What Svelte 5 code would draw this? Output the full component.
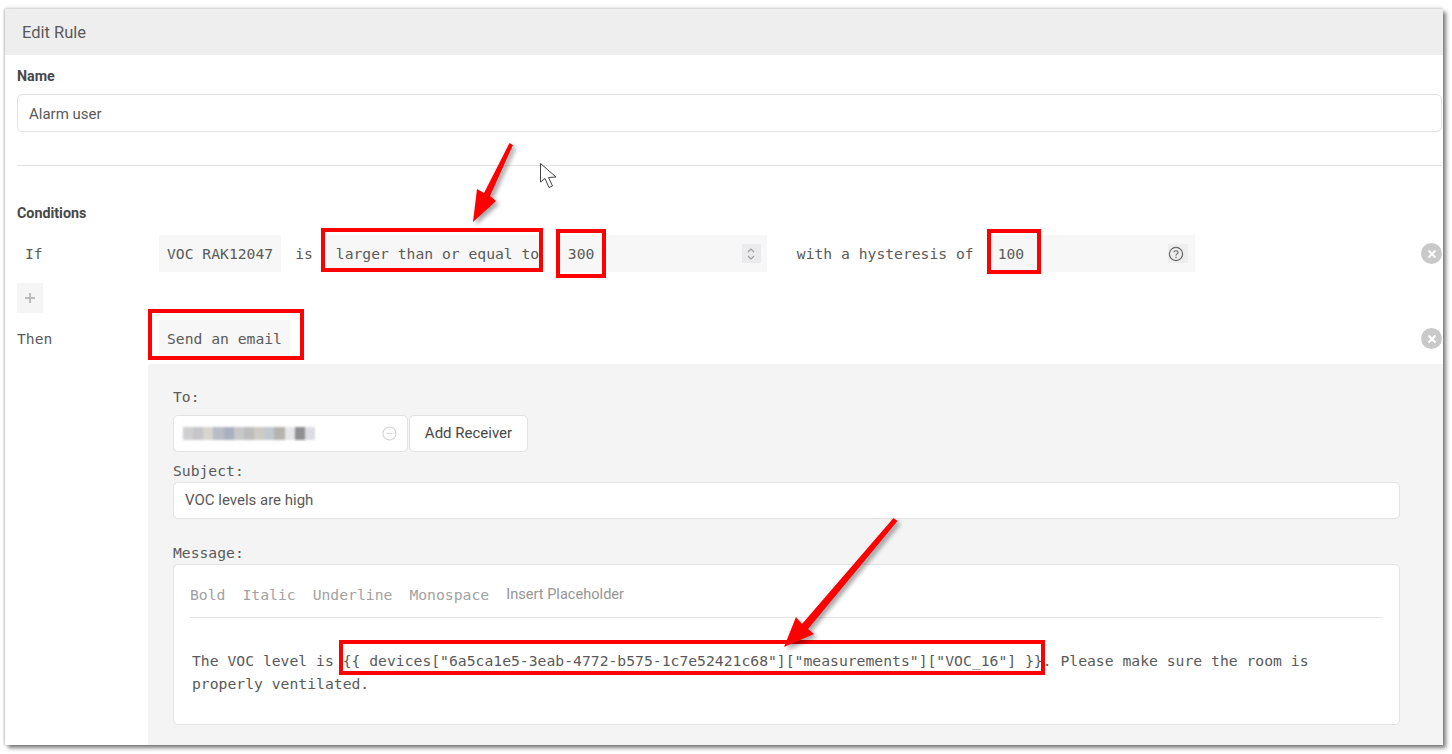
<script>
  // pixelated tiles standing in for the blurred e-mail address
  const blurred = ['#cfcfd2', '#c6c6c8', '#d8d5d0', '#b9bcc6', '#aab0bd', '#c9c8c8', '#bdbdbd', '#cfcbc4', '#c2c8d0', '#b5b3b0', '#e6e6e8', '#8f8f92', '#dcdde2'];
  const redBoxes = [
    [323, 230, 218, 40],
    [558, 231, 46, 45],
    [989, 231, 50, 41],
    [150, 311, 152, 47],
    [341, 642, 702, 31]
  ];
  const message = 'The VOC level is {{ devices["6a5ca1e5-3eab-4772-b575-1c7e52421c68"]["measurements"]["VOC_16"] }}. Please make sure the room is properly ventilated.';
</script>

<div class="page">
  <div class="frame">
    <div class="head">Edit Rule</div>
    <div class="content">
      <div class="name-label">Name</div>
      <div class="field name-field">Alarm user</div>
      <div class="divider"></div>
      <div class="cond-label">Conditions</div>

      <div class="row if-row">
        <div class="row-label if">If</div>
        <div class="block">VOC RAK12047</div>
        <span class="word is">is</span>
        <div class="block select">larger than or equal to</div>
        <div class="block number first">
          300
          <span class="mini">
            <svg width="10" height="16" viewBox="0 0 10 16" fill="none" stroke="#9a9aa0" stroke-width="1.2">
              <path d="M2 6 L5 3 L8 6" />
              <path d="M2 10 L5 13 L8 10" />
            </svg>
          </span>
        </div>
        <span class="word hyst">with a hysteresis of</span>
        <div class="block number second">
          100
          <span class="mini help">
            <svg width="16" height="16" viewBox="0 0 16 16" fill="none" stroke="#666" stroke-width="1.2">
              <circle cx="8" cy="8" r="6.6" />
              <path d="M5.9 6.3 C6 4.2 10 4.2 10 6.4 C10 8 8 7.8 8 9.6" />
              <path d="M8 10.8 V12" />
            </svg>
          </span>
        </div>
        <span class="close"><svg width="10" height="10" viewBox="0 0 10 10" stroke="#fff" stroke-width="2"><path d="M1.5 1.5 L8.5 8.5 M8.5 1.5 L1.5 8.5" /></svg></span>
      </div>

      <div class="plus">
        <svg width="12" height="12" viewBox="0 0 12 12" stroke="#bcbcbc" stroke-width="2"><path d="M6 1 V11 M1 6 H11" /></svg>
      </div>

      <div class="row then-row">
        <div class="row-label">Then</div>
        <div class="block">Send an email</div>
        <span class="close"><svg width="10" height="10" viewBox="0 0 10 10" stroke="#fff" stroke-width="2"><path d="M1.5 1.5 L8.5 8.5 M8.5 1.5 L1.5 8.5" /></svg></span>
      </div>

      <div class="panel">
        <div class="mono-label to">To:</div>
        <div class="to-row">
          <div class="field to-field">
            <span class="blur">
              {#each blurred as c}
                <i style="background:{c}"></i>
              {/each}
            </span>
            <svg width="15" height="15" viewBox="0 0 15 15" fill="none" stroke="#d4d4d4" stroke-width="1.2">
              <circle cx="7.5" cy="7.5" r="6.5" />
              <path d="M4.5 7.5 H10.5" />
            </svg>
          </div>
          <div class="field add">Add Receiver</div>
        </div>
        <div class="mono-label subject">Subject:</div>
        <div class="field wide">VOC levels are high</div>
        <div class="mono-label msg">Message:</div>
        <div class="field message">
          <div class="toolbar">
            <span>Bold</span>
            <span>Italic</span>
            <span>Underline</span>
            <span>Monospace</span>
            <span class="insert">Insert Placeholder</span>
          </div>
          <div class="tool-line"></div>
          <p>{message}</p>
        </div>
      </div>
    </div>
  </div>

  <!-- annotations drawn over the screenshot -->
  <svg class="marks" width="1452" height="754" viewBox="0 0 1452 754">
    {#each redBoxes as b}
      <rect x={b[0]} y={b[1]} width={b[2]} height={b[3]} fill="none" stroke="#f00" stroke-width="4" />
    {/each}
    <g class="arrow">
      <path d="M509.5 143 L513 145 L490 196 L496 201 L473 222 L477 189 L484 193 Z" fill="#f00" />
      <path d="M893.5 518 L897.5 521 L808 629 L814 634 L784 647 L796 617 L802 624 Z" fill="#f00" />
    </g>
    <path d="M540.5 163.5 V182 L545 178.5 L549 187.5 L552.5 186 L548.5 177.5 L556 177 Z" fill="#fff" stroke="#444" stroke-width="1" stroke-linejoin="round" />
  </svg>
</div>

<style>
  :global(body) {
    margin: 0;
    background: #fff;
  }
  .page {
    position: relative;
    width: 1452px;
    height: 754px;
    padding: 9px 0 0 5px;
    box-sizing: border-box;
    overflow: hidden;
    font-family: Roboto, sans-serif;
    color: #5a5a5a;
  }
  .frame {
    width: 1438px;
    height: 736px;
    overflow: hidden;
    background: #fff;
    box-shadow: 3px 3px 4px rgba(0, 0, 0, 0.5), 0 -3px 3px rgba(0, 0, 0, 0.06), -1px 0 2px rgba(0, 0, 0, 0.22);
  }
  .head {
    height: 46px;
    line-height: 47px;
    padding-left: 17px;
    background: #eee;
    font-size: 16.5px;
  }
  .content {
    padding: 0 1px 0 12px;
  }
  .name-label,
  .cond-label {
    height: 20px;
    line-height: 20px;
    font-size: 14.3px;
    font-weight: 700;
    color: #484848;
  }
  .name-label {
    margin-top: 11px;
  }
  .field {
    box-sizing: border-box;
    background: #fff;
    border: 1px solid #e2e2e2;
    border-radius: 5px;
    font-size: 15px;
  }
  .name-field {
    height: 38px;
    line-height: 38px;
    margin-top: 8px;
    padding-left: 11px;
  }
  .divider {
    height: 1px;
    margin-top: 33px;
    background: #e2e2e2;
  }
  .cond-label {
    margin-top: 37px;
  }
  .row {
    display: flex;
    align-items: center;
    font-family: "DejaVu Sans Mono", monospace;
    font-size: 14.7px;
  }
  .row-label {
    width: 142px;
    flex: none;
  }
  .row-label.if {
    padding-left: 8px;
    box-sizing: border-box;
  }
  .if-row {
    height: 37px;
    margin-top: 12px;
  }
  .then-row {
    height: 37px;
    margin-top: 7px;
  }
  .block {
    box-sizing: border-box;
    height: 100%;
    display: flex;
    align-items: center;
    padding: 0 8px;
    background: #f7f7f7;
    white-space: nowrap;
  }
  .word {
    white-space: nowrap;
  }
  .word.is {
    margin: 0 15px 0 14px;
  }
  .block.select {
    width: 214px;
    padding-right: 0;
  }
  .block.number {
    justify-content: space-between;
    padding-right: 6px;
  }
  .block.first {
    width: 207px;
    margin-left: 18px;
  }
  .block.second {
    width: 205px;
    padding-right: 7px;
  }
  .word.hyst {
    margin: 0 16px 0 30px;
  }
  .mini {
    width: 19px;
    height: 19px;
    display: flex;
    align-items: center;
    justify-content: center;
    background: #ebebee;
  }
  .mini.help {
    width: 20px;
    justify-content: flex-start;
    background: #eee;
  }
  .close {
    width: 21px;
    height: 21px;
    margin-left: auto;
    border-radius: 50%;
    background: #c9c9c9;
    display: flex;
    align-items: center;
    justify-content: center;
  }
  .plus {
    width: 26px;
    height: 30px;
    margin-top: 11px;
    background: #f5f5f5;
    display: flex;
    align-items: center;
    justify-content: center;
  }
  .panel {
    height: 381px;
    margin: 7px -1px 0 131px;
    padding: 23px 0 0 25px;
    background: #f4f4f4;
    border-radius: 3px 0 0 0;
  }
  .mono-label {
    height: 20px;
    line-height: 20px;
    font-family: "DejaVu Sans Mono", monospace;
    font-size: 14.7px;
  }
  .to-row {
    display: flex;
    gap: 1px;
    height: 37px;
    margin-top: 8px;
  }
  .to-field {
    width: 235px;
    display: flex;
    align-items: center;
    justify-content: space-between;
    padding: 0 10px 0 9px;
  }
  .blur {
    display: flex;
    width: 132px;
    height: 13px;
    filter: blur(1px);
  }
  .blur i {
    flex: 1;
  }
  .add {
    width: 119px;
    line-height: 35px;
    text-align: center;
    color: #484848;
  }
  .subject {
    margin-top: 9px;
  }
  .wide {
    width: 1227px;
    height: 37px;
    line-height: 35px;
    margin-top: 1px;
    padding-left: 11px;
  }
  .msg {
    margin-top: 24px;
  }
  .message {
    width: 1227px;
    height: 161px;
    margin-top: 1px;
    padding: 0 16px;
    font-family: "DejaVu Sans Mono", monospace;
    font-size: 14.72px;
  }
  .toolbar {
    display: flex;
    gap: 17px;
    align-items: center;
    height: 20px;
    margin-top: 19px;
    color: #a2a2a2;
    white-space: nowrap;
  }
  .insert {
    font-family: Roboto, sans-serif;
    font-size: 14.6px;
    color: #969696;
    margin-top: -1px;
  }
  .tool-line {
    height: 1px;
    margin-top: 13px;
    background: #e4e4e4;
  }
  .message p {
    margin: 31px 0 0 2px;
    line-height: 23px;
  }
  .marks {
    position: absolute;
    left: 0;
    top: 0;
    pointer-events: none;
  }
  .arrow {
    filter: drop-shadow(3px 3px 2px rgba(0, 0, 0, 0.35));
  }
</style>
